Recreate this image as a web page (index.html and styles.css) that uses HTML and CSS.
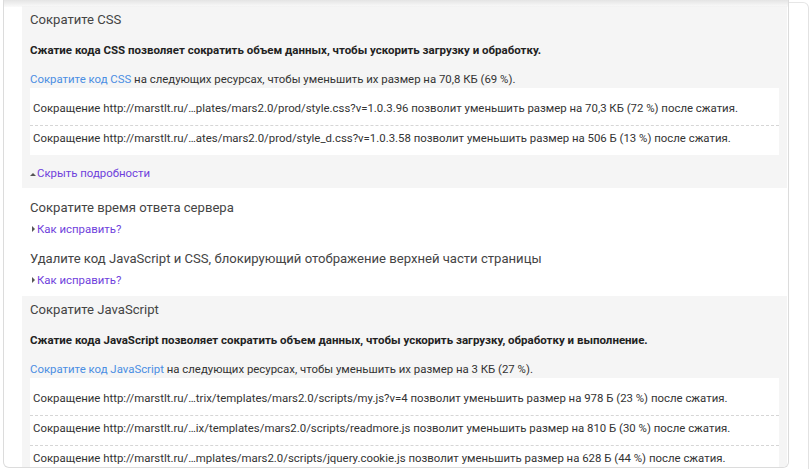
FILE: index.html
```html
<!DOCTYPE html>
<html lang="ru">
<head>
<meta charset="utf-8">
<title>PageSpeed</title>
<link rel="stylesheet" href="styles.css">
</head>
<body>
<div class="page">
  <div class="card">
    <div class="scroll-shadow"></div>

    <section class="rule rule-open">
      <h3 class="rule-title">Сократите CSS</h3>
      <p class="summary">Сжатие кода CSS позволяет сократить объем данных, чтобы ускорить загрузку и обработку.</p>
      <p class="intro"><a class="link" href="#">Сократите код CSS</a> на следующих ресурсах, чтобы уменьшить их размер на 70,8 КБ (69 %).</p>
      <ul class="urls">
        <li>Сокращение http://marstlt.ru/…plates/mars2.0/prod/style.css?v=1.0.3.96 позволит уменьшить размер на 70,3 КБ (72 %) после сжатия.</li>
        <li>Сокращение http://marstlt.ru/…ates/mars2.0/prod/style_d.css?v=1.0.3.58 позволит уменьшить размер на 506 Б (13 %) после сжатия.</li>
      </ul>
      <a class="toggle toggle-up" href="#">Скрыть подробности</a>
    </section>

    <section class="rule rule-closed">
      <h3 class="rule-title">Сократите время ответа сервера</h3>
      <a class="toggle toggle-right" href="#">Как исправить?</a>
      <h3 class="rule-title next">Удалите код JavaScript и CSS, блокирующий отображение верхней части страницы</h3>
      <a class="toggle toggle-right" href="#">Как исправить?</a>
    </section>

    <section class="rule rule-open">
      <h3 class="rule-title">Сократите JavaScript</h3>
      <p class="summary">Сжатие кода JavaScript позволяет сократить объем данных, чтобы ускорить загрузку, обработку и выполнение.</p>
      <p class="intro"><a class="link" href="#">Сократите код JavaScript</a> на следующих ресурсах, чтобы уменьшить их размер на 3 КБ (27 %).</p>
      <ul class="urls">
        <li>Сокращение http://marstlt.ru/…trix/templates/mars2.0/scripts/my.js?v=4 позволит уменьшить размер на 978 Б (23 %) после сжатия.</li>
        <li>Сокращение http://marstlt.ru/…ix/templates/mars2.0/scripts/readmore.js позволит уменьшить размер на 810 Б (30 %) после сжатия.</li>
        <li>Сокращение http://marstlt.ru/…mplates/mars2.0/scripts/jquery.cookie.js позволит уменьшить размер на 628 Б (44 %) после сжатия.</li>
      </ul>
    </section>
  </div>
  <div class="side"></div>
</div>
</body>
</html>
```
FILE: styles.css
```css
* { box-sizing: border-box; }

html, body {
  margin: 0;
  padding: 0;
  background: #ffffff;
}

body {
  font-family: Roboto, "Noto Sans", "Liberation Sans", sans-serif;
  font-size: 11.4px;
  line-height: 16px;
  color: #333333;
}

.page {
  display: flex;
  align-items: flex-start;
  height: 469px;
  overflow: hidden;
  padding-left: 3px;
}

.card {
  position: relative;
  width: 786px;
  height: 468px;
  overflow: hidden;
  padding: 6px 1px 0 18px;
  border: 1px solid #dcdcdc;
  border-top: none;
  border-radius: 0 0 6px 6px;
  background: #ffffff;
}

.scroll-shadow {
  position: absolute;
  left: 0;
  right: 0;
  top: 0;
  height: 7px;
  background: linear-gradient(#e4e4e4, rgba(240, 240, 240, 0.3));
}

.side {
  width: 20px;
  height: 469px;
  margin-top: 2px;
  border-top: 1px solid #e6e6e6;
  border-right: 1px solid #e2e2e2;
  border-radius: 0 6px 0 0;
}

.rule {
  padding: 0 8px;
}

.rule-open {
  background: #f5f5f5;
  padding-top: 4px;
  padding-bottom: 7px;
}

.rule-closed {
  padding-top: 10px;
  padding-bottom: 8px;
}

.rule-title {
  margin: 0;
  font-size: 13.1px;
  line-height: 20px;
  font-weight: 400;
  color: #444444;
}

.rule-title.next {
  margin-top: 12px;
}

.summary {
  margin: 12px 0 0;
  font-size: 11.5px;
  font-weight: 700;
  color: #222222;
}

.intro {
  margin: 13px 0 0;
  color: #333333;
}

.link {
  color: #4a8ee3;
  text-decoration: none;
}

.urls {
  list-style: none;
  margin: 1px 0 0;
  padding: 8px 0 0;
  background: #ffffff;
}

.urls li {
  padding: 4px 3px 9px;
  border-bottom: 1px dashed #d6d6d6;
  white-space: nowrap;
}

.urls li:last-child {
  border-bottom: none;
}

.toggle {
  display: flex;
  align-items: center;
  width: max-content;
  color: #6f3fdc;
  text-decoration: none;
}

.rule-open .toggle {
  margin-top: 10px;
}

.rule-closed .toggle {
  margin-top: 3px;
}

.toggle::before {
  content: "";
  display: inline-block;
  width: 0;
  height: 0;
}

.toggle-up::before {
  border-left: 3px solid transparent;
  border-right: 3px solid transparent;
  border-bottom: 3px solid #555555;
  margin-top: 2px;
  margin-right: 1px;
}

.toggle-right::before {
  border-top: 3px solid transparent;
  border-bottom: 3px solid transparent;
  border-left: 3px solid #555555;
  margin-left: 2px;
  margin-right: 2px;
}
```
